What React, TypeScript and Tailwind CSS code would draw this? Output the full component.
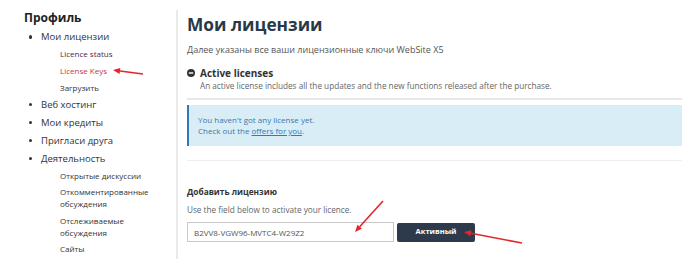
import React from 'react';

const topItems = [
  {
    label: 'Мои лицензии',
    gap: 'gap-[5px]',
    sub: [
      { label: 'Licence status', color: 'text-[#4a2c48]' },
      { label: 'License Keys', color: 'text-[#c43a3a]' },
      { label: 'Загрузить', color: 'text-[#333]' },
    ],
  },
  { label: 'Веб хостинг', gap: '', sub: [] },
  { label: 'Мои кредиты', gap: '', sub: [] },
  { label: 'Пригласи друга', gap: '', sub: [] },
  {
    label: 'Деятельность',
    gap: 'gap-[4.5px]',
    sub: [
      { label: 'Открытые дискуссии', color: 'text-[#333]' },
      { label: 'Откомментированные обсуждения', color: 'text-[#333]' },
      { label: 'Отслеживаемые обсуждения', color: 'text-[#333]' },
      { label: 'Сайты', color: 'text-[#333]' },
      { label: 'Облачные сайты', color: 'text-[#333]' },
    ],
  },
];

const arrows = [
  { from: [143, 74], to: [113, 70] },
  { from: [383, 201], to: [355, 232] },
  { from: [522, 243], to: [464, 232] },
];

const Arrow = ({ from, to }: { from: number[]; to: number[] }) => {
  const dx = to[0] - from[0];
  const dy = to[1] - from[1];
  const len = Math.hypot(dx, dy);
  const ux = dx / len;
  const uy = dy / len;
  const bx = to[0] - ux * 7;
  const by = to[1] - uy * 7;
  const pts = [
    `${to[0]},${to[1]}`,
    `${bx - uy * 3},${by + ux * 3}`,
    `${bx + uy * 3},${by - ux * 3}`,
  ].join(' ');
  return (
    <g>
      <line x1={from[0]} y1={from[1]} x2={bx} y2={by} stroke="#e3262b" strokeWidth="1.6" />
      <polygon points={pts} fill="#e3262b" />
    </g>
  );
};

const Sidebar = () => (
  <aside className="w-[176px] shrink-0 pl-[24px] pr-[12px] pt-[8px] text-[#333]">
    <h2 className="text-[12px] leading-[20px] font-bold text-[#222]">Профиль</h2>
    <ul>
      {topItems.map((item) => (
        <li key={item.label}>
          <div className="flex items-center text-[9.5px] leading-[18px]">
            <span className="ml-[4.5px] mr-[9px] w-[3.5px] h-[3.5px] rounded-full bg-[#333]" />
            {item.label}
          </div>
          {item.sub.length > 0 && (
            <ul className={`pl-[36px] pt-[2px] pb-[1.5px] flex flex-col ${item.gap}`}>
              {item.sub.map((s) => (
                <li key={s.label} className={`text-[8px] leading-[12px] ${s.color}`}>
                  {s.label}
                </li>
              ))}
            </ul>
          )}
        </li>
      ))}
    </ul>
  </aside>
);

export default function App() {
  return (
    <div className="relative w-[700px] h-[263px] overflow-hidden bg-white flex font-['Open_Sans',sans-serif]">
      <Sidebar />

      <main className="mt-[10px] h-[249px] w-[506px] border-l-2 border-[#e9e9e9] pl-[9px]">
        <h1 className="pt-[3px] text-[17.3px] leading-[24px] font-bold text-[#283847]">Мои лицензии</h1>
        <p className="mt-[6.5px] text-[9px] leading-[12px] text-[#555]">
          Далее указаны все ваши лицензионные ключи WebSite X5
        </p>

        <div className="mt-[10px] flex items-center gap-[5px] text-[10px] leading-[14px] font-bold text-[#333]">
          <svg width="8" height="8" viewBox="0 0 8 8">
            <circle cx="4" cy="4" r="4" fill="#333" />
            <rect x="1.8" y="3.3" width="4.4" height="1.4" fill="#fff" />
          </svg>
          Active licenses
        </div>
        <p className="pl-[13px] text-[8.2px] leading-[12px] text-[#666]">
          An active license includes all the updates and the new functions released after the purchase.
        </p>

        <div className="mt-[6px] h-[2px] bg-[#e8e8e8]" />

        <div className="mt-[5px] h-[41px] bg-[#d9edf7] border-l-2 border-[#2f78b8] pl-[9px] pt-[9.5px] text-[8px] leading-[11px] text-[#3b78a8]">
          <p>You haven't got any license yet.</p>
          <p>
            Check out the <a className="underline text-[#2f7bbd]">offers for you</a>.
          </p>
        </div>

        <div className="mt-[14px] h-[1.5px] bg-[#eeeeee]" />

        <h3 className="mt-[25px] text-[8.3px] leading-[12px] font-bold text-[#333]">Добавить лицензию</h3>
        <p className="mt-[6px] text-[8.2px] leading-[12px] text-[#666]">
          Use the field below to activate your licence.
        </p>

        <div className="mt-[6px] flex items-center gap-[3px]">
          <input
            readOnly
            value="B2VV8-VGW96-MVTC4-W29Z2"
            className="w-[207px] h-[20px] border border-[#c8c8c8] px-[6px] text-[8px] text-[#555] outline-none"
          />
          <button className="w-[78px] h-[19px] rounded-[2px] bg-[#2c3a4b] text-white text-[7.5px] font-bold">
            Активный
          </button>
        </div>
      </main>

      <svg className="absolute inset-0 pointer-events-none" width="700" height="263">
        {arrows.map((a, i) => (
          <Arrow key={i} from={a.from} to={a.to} />
        ))}
      </svg>
    </div>
  );
}
